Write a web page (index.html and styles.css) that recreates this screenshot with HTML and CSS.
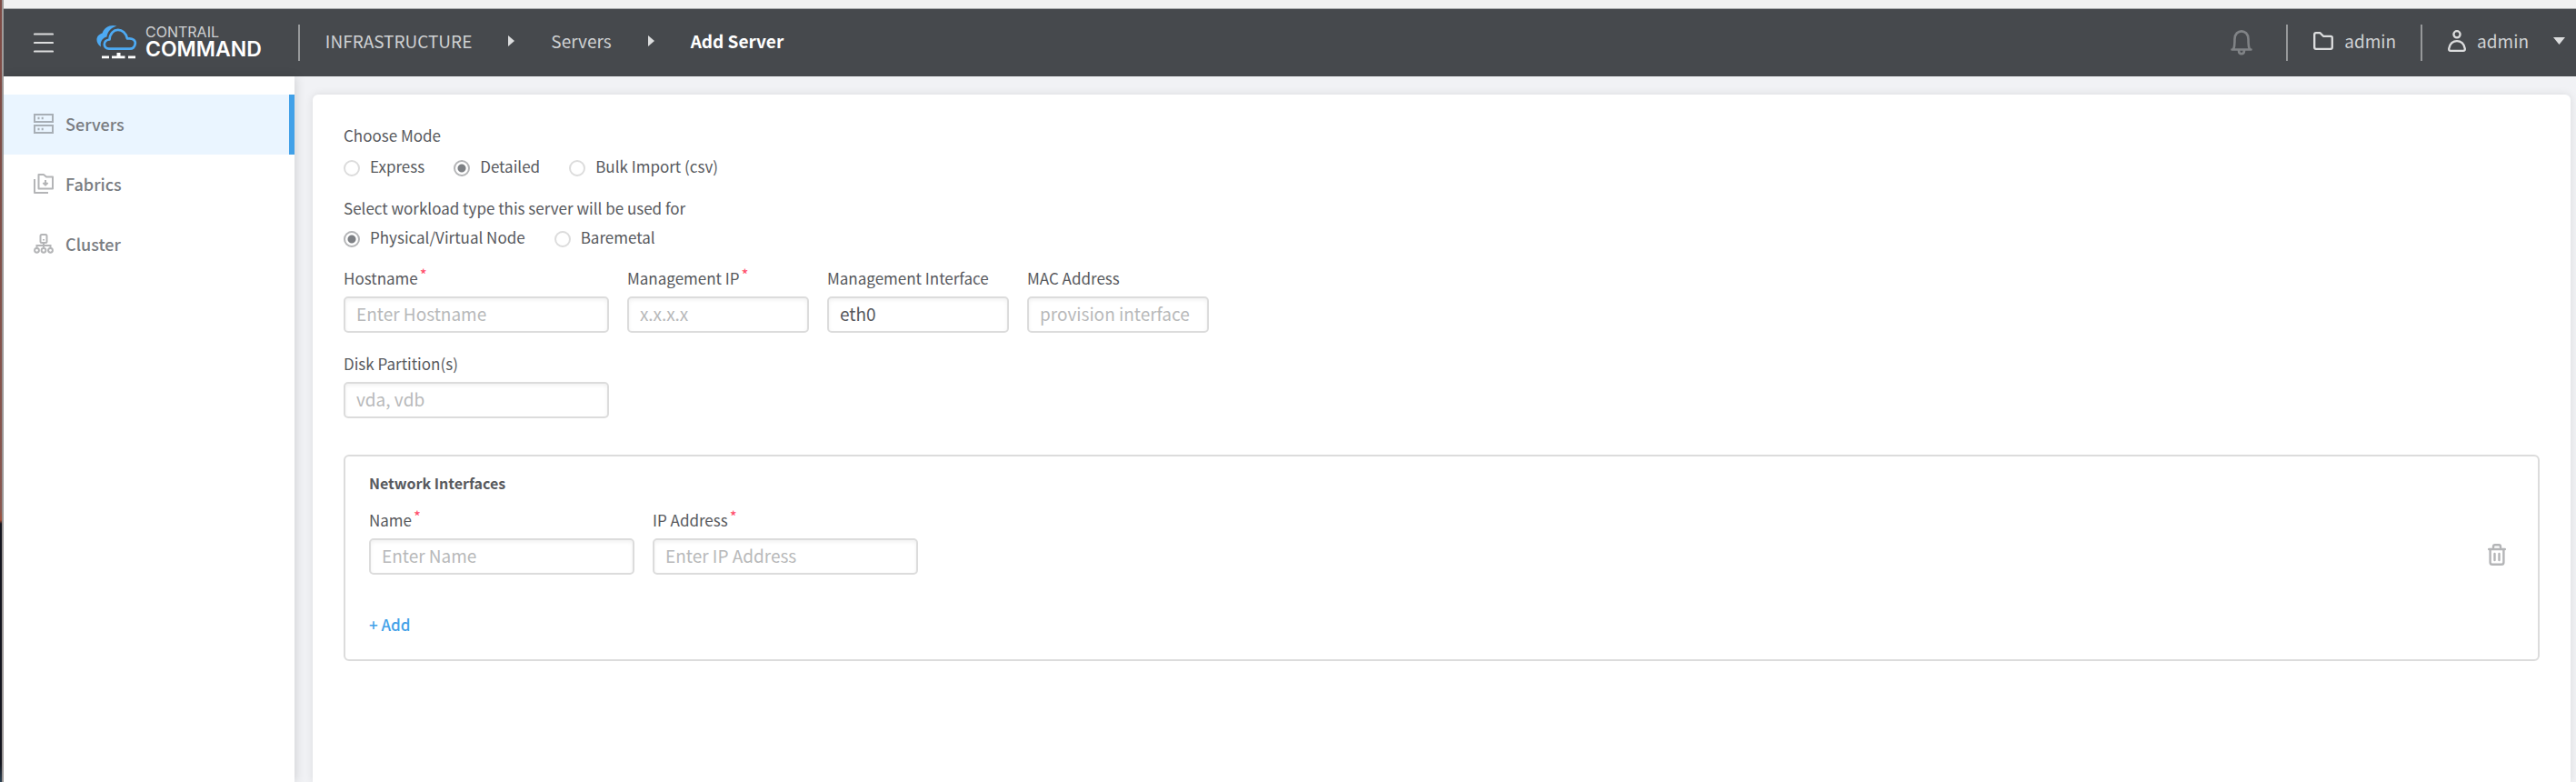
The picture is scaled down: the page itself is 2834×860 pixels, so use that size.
FILE: index.html
```html
<!DOCTYPE html>
<html lang="en">
<head>
<meta charset="utf-8">
<meta name="viewport" content="width=device-width, initial-scale=1">
<title>Contrail Command - Add Server</title>
<link rel="stylesheet" href="styles.css">
</head>
<body>
<div class="desktop-edge"></div>
<div class="window">
  <header class="topbar">
    <button class="icon-button menu-button" type="button" aria-label="Menu">
      <svg width="22" height="22" viewBox="0 0 22 22"><path d="M1 1.500h20M1 11h20M1 20.500h20" fill="none" stroke="#dcddde" stroke-width="2.200" stroke-linecap="round"/></svg>
    </button>
    <a class="logo" href="#" aria-label="Contrail Command">
      <svg width="46" height="40" viewBox="0 0 46 40">
        <path d="M5 24.500C-2 19.500-0.500 11.500 6.500 9.500C8.500 2.500 16-0.500 22.500 1.500C15.500 4 12.500 7.500 11.500 13.500C6 15 4 19.500 5 24.500Z" fill="#4daaf3"/>
        <path d="M14 26.700C7 26.700 7 17 14.500 16.500C15.500 2.500 31.500 2.500 34 15.500C40.500 14.500 43.500 18 42.700 21.500C42 25 40 26.700 37 26.700Z" fill="none" stroke="#4daaf3" stroke-width="2.700" stroke-linejoin="round"/>
        <path d="M6 35.800h8M17 35.800h14.500M35 35.800h8" fill="none" stroke="#fff" stroke-width="2.800"/>
        <path d="M24.500 31v4" fill="none" stroke="#fff" stroke-width="4"/>
      </svg>
      <span class="logo-words"><span class="logo-top">CONTRAIL</span><span class="logo-bottom">COMMAND</span></span>
    </a>
    <nav class="crumbs" aria-label="Breadcrumb">
      <a href="#">INFRASTRUCTURE</a>
      <svg width="7" height="12" viewBox="0 0 7 12"><path d="M0 0L7 6L0 12Z" fill="#dcddde"/></svg>
      <a href="#">Servers</a>
      <svg width="7" height="12" viewBox="0 0 7 12"><path d="M0 0L7 6L0 12Z" fill="#dcddde"/></svg>
      <span class="crumb-current">Add Server</span>
    </nav>
    <div class="tools">
      <button class="icon-button bell" type="button" aria-label="Notifications">
        <svg width="24" height="28" viewBox="0 0 24 28"><path d="M1.500 21.500H22.500M3 21C4.500 19 4.500 16 4.500 10C4.500-1.500 19.500-1.500 19.500 10C19.500 16 19.500 19 21 21M9 22.500C9 27.500 15 27.500 15 22.500" fill="none" stroke="#808386" stroke-width="2.600" stroke-linecap="round" stroke-linejoin="round"/></svg>
      </button>
      <button class="tool project" type="button">
        <svg width="22" height="20" viewBox="0 0 22 20"><path d="M3 1.200H7.500L11 4.800H19Q20.800 4.800 20.800 6.500V17Q20.800 18.800 19 18.800H3Q1.200 18.800 1.200 17V3Q1.200 1.200 3 1.200Z" fill="none" stroke="#dcddde" stroke-width="2.300" stroke-linejoin="round"/></svg>
        admin
      </button>
      <button class="tool user" type="button">
        <svg width="20" height="24" viewBox="0 0 20 24"><circle cx="10" cy="4.800" r="3.600" fill="none" stroke="#dcddde" stroke-width="2.300"/><path d="M3 22.800H17Q19 22.800 18.800 20.500C17.500 9.200 2.500 9.200 1.200 20.500Q1 22.800 3 22.800Z" fill="none" stroke="#dcddde" stroke-width="2.300"/></svg>
        admin
        <svg class="caret" width="13" height="8" viewBox="0 0 13 8"><path d="M0 0H13L6.500 8Z" fill="#dcddde"/></svg>
      </button>
    </div>
  </header>
  <div class="workspace">
    <nav class="sidebar" aria-label="Infrastructure">
      <a class="side-item active" href="#">
        <svg width="22" height="22" viewBox="0 0 22 22"><g fill="none" stroke="#a8afb6" stroke-width="2"><rect x="1" y="1" width="20" height="8"/><rect x="1" y="13" width="20" height="8"/><path d="M5.500 3.800v2.400M9.700 3.800v2.400M5.500 15.800v2.400M9.700 15.800v2.400"/></g></svg>
        Servers
      </a>
      <a class="side-item" href="#">
        <svg width="22" height="22" viewBox="0 0 22 22"><g fill="none" stroke="#b4b5b7" stroke-width="2" stroke-linejoin="round"><path d="M5.500 1H11L14 3.500H21V16.500H5.500ZM1 6V21H16M13 7v5.500M10.400 10l2.600 2.600l2.600-2.600"/></g></svg>
        Fabrics
      </a>
      <a class="side-item" href="#">
        <svg width="22" height="22" viewBox="0 0 22 22"><g fill="none" stroke="#b4b5b7" stroke-width="2"><rect x="7.500" y="1" width="7" height="9" rx="1.500"/><path d="M11 6v1.500M11 10v5M3.500 16V13H18.500V16"/><circle cx="3.500" cy="18.300" r="2.400"/><circle cx="11" cy="18.300" r="2.400"/><circle cx="18.500" cy="18.300" r="2.400"/></g></svg>
        Cluster
      </a>
    </nav>
    <main class="content">
      <form class="card">
        <div class="choice" role="radiogroup" aria-labelledby="mode-label">
          <span class="label" id="mode-label">Choose Mode</span>
          <div class="options">
            <label class="option"><input type="radio" name="mode">Express</label>
            <label class="option"><input type="radio" name="mode" checked>Detailed</label>
            <label class="option"><input type="radio" name="mode">Bulk Import (csv)</label>
          </div>
        </div>
        <div class="choice" role="radiogroup" aria-labelledby="type-label">
          <span class="label" id="type-label">Select workload type this server will be used for</span>
          <div class="options workload">
            <label class="option"><input type="radio" name="type" checked>Physical/Virtual Node</label>
            <label class="option"><input type="radio" name="type">Baremetal</label>
          </div>
        </div>
        <div class="fields">
          <div class="field large"><label for="hostname">Hostname<span class="required">*</span></label><input id="hostname" type="text" placeholder="Enter Hostname"></div>
          <div class="field"><label for="mgmt-ip">Management IP<span class="required">*</span></label><input id="mgmt-ip" type="text" placeholder="x.x.x.x"></div>
          <div class="field"><label for="mgmt-if">Management Interface</label><input id="mgmt-if" type="text" value="eth0"></div>
          <div class="field"><label for="mac">MAC Address</label><input id="mac" type="text" placeholder="provision interface"></div>
        </div>
        <div class="fields">
          <div class="field large"><label for="disk">Disk Partition(s)</label><input id="disk" type="text" placeholder="vda, vdb"></div>
        </div>
        <section class="interfaces">
          <h2>Network Interfaces</h2>
          <div class="fields">
            <div class="field large"><label for="if-name">Name<span class="required">*</span></label><input id="if-name" type="text" placeholder="Enter Name"></div>
            <div class="field large"><label for="if-ip">IP Address<span class="required">*</span></label><input id="if-ip" type="text" placeholder="Enter IP Address"></div>
            <button class="icon-button trash" type="button" aria-label="Delete interface">
              <svg width="20" height="24" viewBox="0 0 20 24"><g fill="none" stroke="#b4b5b7" stroke-width="2.400" stroke-linecap="round" stroke-linejoin="round"><path d="M1.200 6H18.800M2.600 6V20.500Q2.600 22.800 5 22.800H15Q17.400 22.800 17.400 20.500V6M6 6V3.200Q6 1.200 8 1.200H12Q14 1.200 14 3.200V6M7.500 11v7M12.500 11v7"/></g></svg>
            </button>
          </div>
          <button class="add" type="button">+ Add</button>
        </section>
      </form>
    </main>
  </div>
</div>
</body>
</html>
```
FILE: styles.css
```css
* {
  box-sizing: border-box;
}

body {
  display: flex;
  min-height: 100vh;
  margin: 0;
  background: #f1f2f5;
  color: #57595d;
  font: 17px/24px "Noto Sans CJK SC", "Noto Sans", sans-serif;
}

a {
  color: inherit;
  text-decoration: none;
}

svg {
  display: block;
  flex: none;
}

button {
  padding: 0;
  border: 0;
  background: none;
  color: inherit;
  font: inherit;
}

.desktop-edge {
  flex: none;
  width: 4px;
  border-right: 2px solid #a09c9b;
  background: linear-gradient(#7d4b45 0, #8b5850 560px, #a4503a 572px, #14151e 576px, #14151e 840px, #2c4052 860px);
}

.window {
  display: flex;
  flex: 1;
  flex-direction: column;
  min-width: 0;
  border-top: 9px solid #f1f1f1;
}

.topbar {
  display: flex;
  align-items: center;
  height: 75px;
  padding: 0 12px 0 33px;
  border-top: 1px solid #a9abad;
  background: #46494d;
  color: #cfd1d3;
  font-size: 19px;
}

.logo {
  display: flex;
  gap: 8px;
  margin-left: 47px;
}

.logo-words {
  display: flex;
  flex-direction: column;
  font-family: Inter, sans-serif;
}

.logo-top {
  font-size: 16px;
  font-weight: 400;
  line-height: 16px;
}

.logo-bottom {
  color: #fff;
  font-size: 23px;
  font-weight: 600;
  line-height: 22px;
}

.crumbs {
  display: flex;
  align-items: center;
  gap: 40px;
  height: 40px;
  margin-left: 40px;
  padding: 0 0 4px 28px;
  border-left: 2px solid #96989a;
}

.crumb-current {
  color: #fff;
  font-weight: 700;
}

.tools {
  display: flex;
  align-items: center;
  margin-left: auto;
}

.bell {
  margin-right: 37px;
}

.tool {
  display: flex;
  align-items: center;
  gap: 12px;
  height: 40px;
  padding: 0 0 4px 28px;
  border-left: 2px solid #96989a;
}

.project {
  padding-right: 27px;
}

.caret {
  margin-left: 15px;
}

.workspace {
  display: flex;
  flex: 1;
}

.sidebar {
  flex: none;
  width: 320px;
  padding-top: 20px;
  background: #fff;
  box-shadow: 2px 0 10px #0000001f;
}

.side-item {
  display: flex;
  align-items: center;
  gap: 13px;
  height: 66px;
  padding: 0 27px 2px 33px;
  border-right: 6px solid transparent;
  color: #797c81;
  font-size: 18px;
  font-weight: 500;
}

.side-item.active {
  border-color: #42a1e8;
  background: #eaf5ff;
}

.content {
  display: flex;
  flex: 1;
  padding: 20px 6px 0 20px;
}

.card {
  flex: 1;
  padding: 33px 34px;
  border-radius: 6px 6px 0 0;
  background: #fff;
  box-shadow: 0 0 10px #0000001a;
}

.label {
  display: block;
}

.options {
  display: flex;
  gap: 32px;
  margin: 10px 0 22px;
}

.options.workload {
  margin: 8px 0 21px;
}

.option {
  display: flex;
  align-items: center;
  gap: 11px;
}

.option input {
  appearance: none;
  width: 18px;
  height: 18px;
  margin: 4px 0 0;
  border: 2px solid #dcdcdc;
  border-radius: 50%;
}

.option input:checked {
  border-color: #b4b5b7;
  background: radial-gradient(circle, #7d8084 4px, #fff 5px);
}

.fields {
  display: flex;
  gap: 20px;
  margin-bottom: 22px;
}

.field {
  display: flex;
  flex-direction: column;
  gap: 8px;
  width: 200px;
}

.field.large {
  width: 292px;
}

.field input {
  width: 100%;
  height: 40px;
  padding: 0 12px 4px;
  border: 2px solid #dcdcdc;
  border-radius: 5px;
  background: #fff;
  box-shadow: inset 0 2px 4px #0000000f;
  color: #57595d;
  font: inherit;
  font-size: 19px;
}

.field input::placeholder {
  color: #b8b9ba;
  opacity: 1;
}

.required {
  margin-left: 2px;
  color: #ff4d6a;
  line-height: 0;
  vertical-align: 4px;
}

.interfaces {
  margin-top: 40px;
  padding: 17px 35px 26px 26px;
  border: 2px solid #dcdcdc;
  border-radius: 6px;
}

h2 {
  margin: 0 0 17px;
  font-size: 16px;
  font-weight: 700;
  line-height: 24px;
}

.interfaces .fields {
  margin-bottom: 43px;
}

.trash {
  align-self: flex-end;
  margin: 0 0 10px auto;
}

.add {
  display: block;
  color: #42a1e8;
  font-weight: 500;
}
```
